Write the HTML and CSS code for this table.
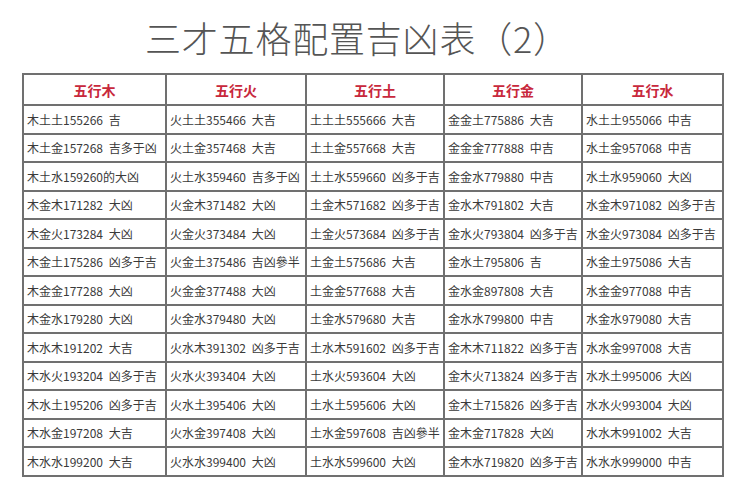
FILE: index.html
```html
<!DOCTYPE html>
<html lang="zh">
<head>
<meta charset="utf-8">
<link rel="stylesheet" href="styles.css">
</head>
<body>
<div class="page">
  <h1 class="title">三才五格配置吉凶表（2）</h1>
  <table class="grid">
    <colgroup>
      <col class="c1"><col class="c2"><col class="c3"><col class="c4"><col class="c5">
    </colgroup>
    <thead>
      <tr><th>五行木</th><th>五行火</th><th>五行土</th><th>五行金</th><th>五行水</th></tr>
    </thead>
    <tbody>
      <tr><td>木土土155266 吉</td><td>火土土355466 大吉</td><td>土土土555666 大吉</td><td>金金土775886 大吉</td><td>水土土955066 中吉</td></tr>
      <tr><td>木土金157268 吉多于凶</td><td>火土金357468 大吉</td><td>土土金557668 大吉</td><td>金金金777888 中吉</td><td>水土金957068 中吉</td></tr>
      <tr><td>木土水159260的大凶</td><td>火土水359460 吉多于凶</td><td>土土水559660 凶多于吉</td><td>金金水779880 中吉</td><td>水土水959060 大凶</td></tr>
      <tr><td>木金木171282 大凶</td><td>火金木371482 大凶</td><td>土金木571682 凶多于吉</td><td>金水木791802 大吉</td><td>水金木971082 凶多于吉</td></tr>
      <tr><td>木金火173284 大凶</td><td>火金火373484 大凶</td><td>土金火573684 凶多于吉</td><td>金水火793804 凶多于吉</td><td>水金火973084 凶多于吉</td></tr>
      <tr><td>木金土175286 凶多于吉</td><td>火金土375486 吉凶參半</td><td>土金土575686 大吉</td><td>金水土795806 吉</td><td>水金土975086 大吉</td></tr>
      <tr><td>木金金177288 大凶</td><td>火金金377488 大凶</td><td>土金金577688 大吉</td><td>金水金897808 大吉</td><td>水金金977088 中吉</td></tr>
      <tr><td>木金水179280 大凶</td><td>火金水379480 大凶</td><td>土金水579680 大吉</td><td>金水水799800 中吉</td><td>水金水979080 大吉</td></tr>
      <tr><td>木水木191202 大吉</td><td>火水木391302 凶多于吉</td><td>土水木591602 凶多于吉</td><td>金木木711822 凶多于吉</td><td>水水金997008 大吉</td></tr>
      <tr><td>木水火193204 凶多于吉</td><td>火水火393404 大凶</td><td>土水火593604 大凶</td><td>金木火713824 凶多于吉</td><td>水水土995006 大凶</td></tr>
      <tr><td>木水土195206 凶多于吉</td><td>火水土395406 大凶</td><td>土水土595606 大凶</td><td>金木土715826 凶多于吉</td><td>水水火993004 大凶</td></tr>
      <tr><td>木水金197208 大吉</td><td>火水金397408 大凶</td><td>土水金597608 吉凶參半</td><td>金木金717828 大凶</td><td>水水木991002 大吉</td></tr>
      <tr><td>木水水199200 大吉</td><td>火水水399400 大凶</td><td>土水水599600 大凶</td><td>金木水719820 凶多于吉</td><td>水水水999000 中吉</td></tr>
    </tbody>
  </table>
</div>
</body>
</html>
```
FILE: styles.css
```css
html, body {
  margin: 0;
  padding: 0;
  background: #ffffff;
}
.page {
  width: 750px;
  height: 500px;
  overflow: hidden;
  font-family: "Noto Sans CJK SC", "Noto Sans", sans-serif;
}
.title {
  margin: 0;
  height: 73px;
  box-sizing: border-box;
  padding: 16px 0 0 145px;
  font-size: 36px;
  line-height: 42px;
  font-weight: 300;
  color: #555555;
  letter-spacing: 0.8px;
}
.grid {
  margin-left: 22px;
  width: 700px;
  table-layout: fixed;
  border-collapse: collapse;
  border: 2px solid #5e5e5e;
}
.c1 { width: 143px; }
.c2 { width: 140px; }
.c3 { width: 138px; }
.c4 { width: 138px; }
.c5 { width: 141px; }
.grid th,
.grid td {
  border: 2px solid #707070;
  padding: 0;
  white-space: nowrap;
  overflow: hidden;
}
.grid th {
  height: 29px;
  font-size: 14px;
  font-weight: 700;
  color: #c8283c;
  text-align: center;
}
.grid td {
  height: 26.5px;
  padding-left: 3px;
  font-size: 12px;
  color: #3a3a3a;
  text-align: left;
  word-spacing: 3px;
}
```
